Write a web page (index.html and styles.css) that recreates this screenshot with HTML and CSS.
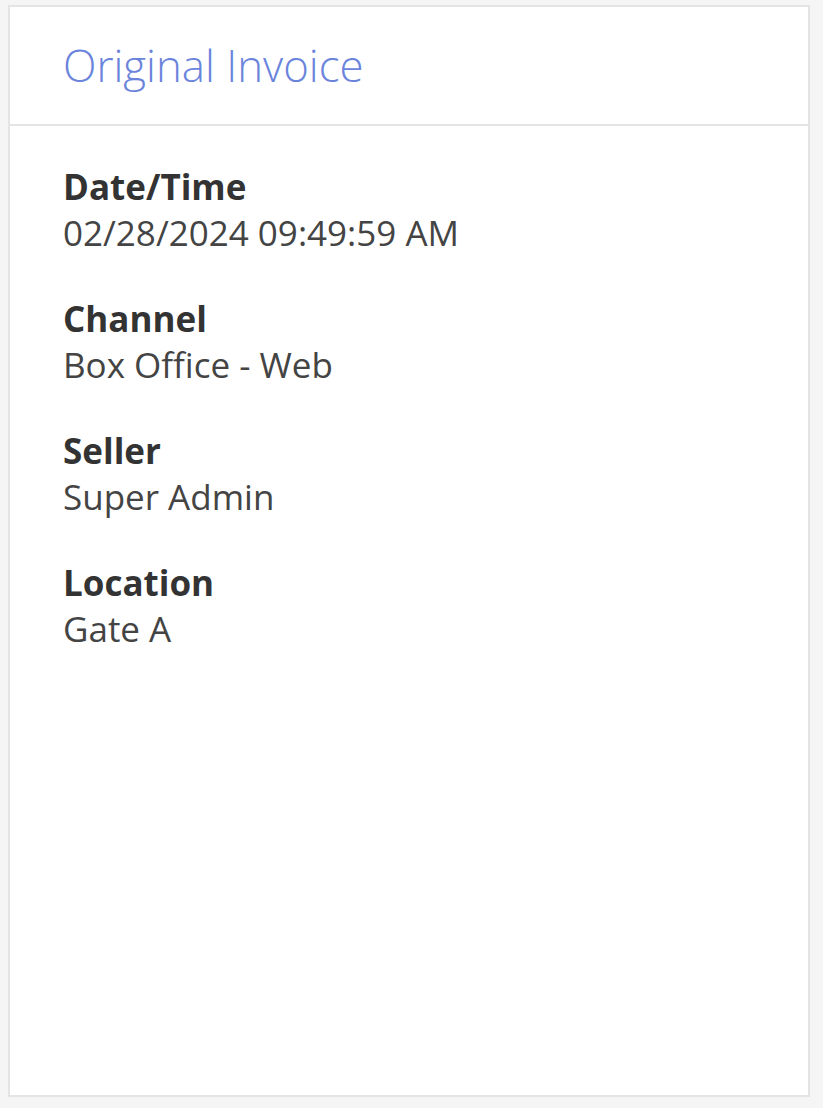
FILE: index.html
```html
<!DOCTYPE html>
<html>
<head>
<meta charset="utf-8">
<link rel="stylesheet" href="styles.css">
</head>
<body>
<div class="card">
  <div class="card-header">
    <h1 class="title">Original Invoice</h1>
  </div>
  <div class="card-body">
    <div class="field">
      <div class="label">Date/Time</div>
      <div class="value">02/28/2024 09:49:59 AM</div>
    </div>
    <div class="field">
      <div class="label">Channel</div>
      <div class="value">Box Office - Web</div>
    </div>
    <div class="field">
      <div class="label">Seller</div>
      <div class="value">Super Admin</div>
    </div>
    <div class="field">
      <div class="label">Location</div>
      <div class="value">Gate A</div>
    </div>
  </div>
</div>
</body>
</html>
```

FILE: styles.css
```css
html, body {
  background: #f5f5f5;
}
body {
  margin: 5px 13px 11px 8px;
  font-family: "Open Sans", "Noto Sans", sans-serif;
}
.card {
  box-sizing: border-box;
  height: 1092px;
  background: #ffffff;
  border: 2px solid #e4e4e4;
  box-shadow: 0 3px 7px rgba(0, 0, 0, 0.08);
  display: flex;
  flex-direction: column;
}
.card-header {
  border-bottom: 2px solid #e4e4e4;
  padding: 28px 20px 29px 53px;
}
.title {
  margin: 0;
  font-size: 43.75px;
  font-weight: 300;
  line-height: normal;
  color: #6a84dc;
}
.card-body {
  padding: 38px 20px 20px 53px;
  display: flex;
  flex-direction: column;
  gap: 40px;
}
.field {
  display: flex;
  flex-direction: column;
}
.label {
  font-size: 35px;
  line-height: 46px;
  font-weight: 700;
  color: #333333;
}
.value {
  font-size: 35px;
  line-height: 46px;
  font-weight: 400;
  color: #444444;
}
```
